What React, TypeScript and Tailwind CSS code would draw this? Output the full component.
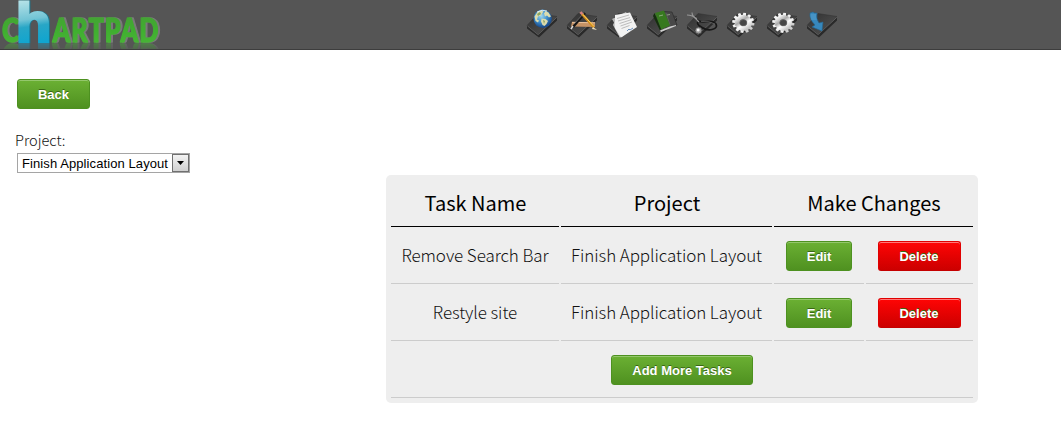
import type { ReactNode } from "react";

const sourceFont = "font-['Noto_Sans_CJK_SC','Noto_Sans',sans-serif]";
const lightFont = "font-['Noto_Sans_CJK_SC_Light','Noto_Sans_CJK_SC_DemiLight','Noto_Sans_CJK_SC','Noto_Sans',sans-serif]";

function Button({ children, tone = "green", width }: { children: ReactNode; tone?: "green" | "red"; width: string }) {
  const color =
    tone === "green"
      ? "border-[#4d9120] from-[#6bb033] to-[#4f9120] shadow-[inset_0_1px_0_#94c76c] [text-shadow:0_-1px_0_#396715]"
      : "border-[#e00000] border-b-[#c50000] from-[#ff0505] to-[#cc0000] pr-px shadow-[inset_0_1px_0_#ff7878] [text-shadow:0_-1px_0_#396715]";
  return (
    <button
      className={`${width} ${color} block h-[30px] shrink-0 rounded-[3px] border bg-linear-to-b text-center font-['Liberation_Sans',sans-serif] text-[13px] leading-[29px] font-bold whitespace-nowrap text-white`}
    >
      {children}
    </button>
  );
}

function Logo() {
  return (
    <svg
      width="180"
      height="43"
      viewBox="0 0 180 43"
      className="block shrink-0 overflow-hidden [-webkit-box-reflect:below_0px_linear-gradient(transparent_75%,rgba(0,0,0,0.45))]"
    >
      <defs>
        <linearGradient id="leaf" gradientUnits="userSpaceOnUse" x1="0" y1="16" x2="0" y2="43">
          <stop offset="0" stopColor="#44a234" />
          <stop offset="0.5" stopColor="#3fae2f" />
          <stop offset="1" stopColor="#47b436" />
        </linearGradient>
        <linearGradient id="aqua" gradientUnits="userSpaceOnUse" x1="26" y1="0" x2="32" y2="43">
          <stop offset="0" stopColor="#b5e2e8" />
          <stop offset="0.45" stopColor="#72c4d5" />
          <stop offset="0.62" stopColor="#28a6c6" />
          <stop offset="1" stopColor="#10a5cf" />
        </linearGradient>
      </defs>
      <g
        fontFamily="Lato, sans-serif"
        fontWeight="900"
        fontSize="33"
        fill="url(#leaf)"
        stroke="url(#leaf)"
        strokeWidth="1.5"
        strokeLinejoin="round"
        className="[filter:drop-shadow(2px_0px_0.5px_#7a7a7a)]"
      >
        <text x="2" y="41.5" textLength="17" lengthAdjust="spacingAndGlyphs">C</text>
        <text x="52.5" y="41.5" textLength="107" lengthAdjust="spacingAndGlyphs" letterSpacing="1.5">ARTPAD</text>
      </g>
      <text
        x="16"
        y="42"
        fontFamily="Liberation Sans, sans-serif"
        fontWeight="700"
        fontSize="56"
        fill="url(#aqua)"
        stroke="url(#aqua)"
        strokeWidth="3"
        textLength="35"
        lengthAdjust="spacingAndGlyphs"
        className="[filter:drop-shadow(1px_0px_0px_#1b7890)]"
      >
        h
      </text>
    </svg>
  );
}

function Tile({ children }: { children: ReactNode }) {
  return (
    <a href="#" className="block size-8">
      <svg width="32" height="32" viewBox="0 0 32 32" className="block">
        <path d="M1 18.5 12 27.5 31 10.5V13.5L13 30.5 1 21.5Z" fill="#2a2a2a" />
        <path d="M1 18.5 12 6.5 31 9.5 12 27.5Z" fill="url(#slate)" stroke="#303030" strokeWidth="0.5" />
        <path d="m1.5 19 10.6 8.7L30.5 10.5" fill="none" stroke="#707070" strokeWidth="0.6" />
        {children}
      </svg>
    </a>
  );
}

function Globe() {
  return (
    <>
      <circle cx="16.7" cy="11.8" r="9.2" fill="url(#ocean)" />
      <path d="M8.5 9.5 11.5 5l4-1.500 2 1-1.500 2-1 2-3 1-1 3 2 1-1 2-2.500-1.500ZM19.500 4l3 1.500 2.500 4-2 1-2-2-2 1-1-3ZM15.500 11.500l4 .5 2.500 2-1.500 3-2 2-2-1-1.500-3.500Z" fill="#dcdcae" />
      <path d="m11 7 3-2 1 2-3 2ZM17 13l2 1-1 3Z" fill="#8aa562" />
      <path d="M11 5q5-3 10-1" stroke="#f5fdff" strokeWidth="1" fill="none" opacity="0.8" />
    </>
  );
}

function Drafting() {
  return (
    <>
      <path d="m6 15 23 .5v4.5L5 19.500Z" fill="#c69366" />
      <path d="m6 15.3 23 .5" stroke="#ebc29b" />
      <path d="M19 6 7 20" stroke="#161616" strokeWidth="2.5" />
      <path d="M18 6 8 17" stroke="#8b8b8b" strokeWidth="0.7" />
      <path d="m7 19-2 3" stroke="#ddd" strokeWidth="1.4" />
      <path d="m16 7 12 13.500" stroke="#cf8b1e" strokeWidth="2.6" />
      <path d="m17 7.500 11 12" stroke="#ffd45f" strokeWidth="1" />
      <path d="m14.500 5 1.800 2.300" stroke="#d9827c" strokeWidth="2.600" />
      <path d="m27 20 4 3-5-1Z" fill="#efe1bf" />
    </>
  );
}

function Papers() {
  return (
    <>
      <path d="M6 12 20 5l9 15-13 10Z" fill="#b7b7b7" />
      <path d="M7 18 11 9l11 9-8 13Z" fill="#ccc" />
      <path d="M9 8 24 5.500 31 20 15 30.500 9 21Z" fill="#f2f2f2" />
      <path d="m11 11.500 12-3.500M12 14l12-3.400M13.500 16.500l11.500-3.700M14.500 19l11.500-4M15.500 21.500l8-3" stroke="#b4b4b4" strokeWidth="0.9" />
      <path d="m21 24 2-2 1 1 3-2" stroke="#6c91bd" fill="none" />
    </>
  );
}

function Books() {
  return (
    <>
      <path d="m18 4.500 8 .5 5 13-11 4Z" fill="#484848" stroke="#292929" strokeWidth="0.6" />
      <path d="m20 6 4 12" stroke="#6b6b6b" strokeWidth="0.6" />
      <path d="M9 6 18 3.500l6 15-9 4Z" fill="#37791f" />
      <path d="m8.500 6 6.500 16-1 1.500L7 9Z" fill="#142f0e" />
      <path d="m14 23.500 10-4 6-1.500v1l-15 6Z" fill="#d0d0d0" />
      <path d="m13 9 4-1m4 0 3-.5" stroke="#a1b994" strokeWidth="0.8" />
    </>
  );
}

function Stethoscope() {
  return (
    <>
      <path d="M9 10q3 5 8 5 10-2 13 2 2 4-4 5.500t-13-4q-3-3 0-4" fill="none" stroke="#171717" strokeWidth="1.700" />
      <path d="M1 8q5 0 8 3t4 4M6 5.500q0 4 5 6" fill="none" stroke="#979797" strokeWidth="1.100" />
      <path d="M15 14.500q8-1 14 2.500" fill="none" stroke="#848484" strokeWidth="0.5" />
      <circle cx="12.500" cy="23.500" r="3.500" fill="#999" stroke="#333" strokeWidth="0.7" />
      <circle cx="12.200" cy="23" r="1.500" fill="#f4f4f4" />
    </>
  );
}

function Gear() {
  const teeth = [0, 30, 60, 90, 120, 150, 180, 210, 240, 270, 300, 330];
  return (
    <g transform="translate(17.3 15.8) rotate(8) scale(1.03 .93)">
      {teeth.map((angle) => (
        <path key={angle} d="m-1.700-7.500.4-3.300h2.600l.4 3.300Z" fill={angle > 60 && angle < 160 ? "#d0d0d0" : "#f2f2f2"} transform={`rotate(${angle})`} />
      ))}
      <circle r="6" fill="none" stroke="url(#silver)" strokeWidth="5" />
      <circle r="3.500" fill="#454545" stroke="#888" strokeWidth="0.5" />
    </g>
  );
}

function ImportArrow() {
  return (
    <>
      <path d="m4 6 3-1 1.500 1L11 6q-1 6 2 10l4-1-1 9-10-4 3-2Q3 12 4 6Z" fill="#3788bd" stroke="#256690" strokeWidth="0.6" />
      <path d="M4.500 8H10m-5.500 2H10m-5 2h5.500" stroke="#64a9d2" strokeWidth="0.7" />
    </>
  );
}

function HeadCell({ children, wide = false }: { children: ReactNode; wide?: boolean }) {
  return (
    <div className={`${wide ? "col-span-2" : ""} flex h-[47px] items-center justify-center border-b border-black pb-px pl-px text-[20px]`}>
      {children}
    </div>
  );
}

function Cell({ children, end = false }: { children: ReactNode; end?: boolean }) {
  return (
    <div className={`${end ? "col-span-4" : ""} flex h-[55px] items-center justify-center border-b border-[#ccc] whitespace-nowrap`}>
      {children}
    </div>
  );
}

function Label({ children }: { children: ReactNode }) {
  return <span className={`${lightFont} pb-[4px] text-[17px] leading-[25px] font-light tracking-[-0.08px] text-[#111]`}>{children}</span>;
}

export default function App() {
  return (
    <div className={`h-[444px] w-[1061px] overflow-hidden bg-white text-black ${sourceFont}`}>
      <header className="flex h-[50px] items-start overflow-hidden border-b border-[#3d3d3d] bg-[#555]">
        <svg width="0" height="0" className="absolute">
          <defs>
            <linearGradient id="slate" x2="1" y2="1"><stop stopColor="#303030" /><stop offset="1" stopColor="#555" /></linearGradient>
            <linearGradient id="silver" x2="1" y2="1"><stop stopColor="#fff" /><stop offset=".35" stopColor="#aaa" /><stop offset=".6" stopColor="#fff" /><stop offset="1" stopColor="#bbb" /></linearGradient>
            <radialGradient id="ocean" cx=".42" cy=".35" r=".6"><stop stopColor="#9fd8ef" /><stop offset=".55" stopColor="#3f8fcc" /><stop offset="1" stopColor="#1a4c8c" /></radialGradient>
          </defs>
        </svg>
        <Logo />
        <nav className="ml-[346px] flex gap-2 pt-[7px]">
          <Tile><Globe /></Tile>
          <Tile><Drafting /></Tile>
          <Tile><Papers /></Tile>
          <Tile><Books /></Tile>
          <Tile><Stethoscope /></Tile>
          <Tile><Gear /></Tile>
          <Tile><Gear /></Tile>
          <Tile><ImportArrow /></Tile>
        </nav>
      </header>

      <main>
        <div className="flex h-[125px] flex-col items-start pt-[29px] pl-[17px]">
          <Button width="w-[73px]">Back</Button>
          <label className={`${lightFont} mt-[21px] -ml-[2px] h-[23px] text-[14.6px] leading-[20px] font-light text-[#111]`}>Project:</label>
          <button className="flex h-5 w-[173px] shrink-0 items-center border border-[#a5a5a5] bg-white pl-1 font-['Liberation_Sans',sans-serif] text-[13px] leading-[18px]">
            <span className="w-[150px] pt-px text-left tracking-[0.09px] whitespace-nowrap">Finish Application Layout</span>
            <span className="flex h-[18px] w-[17px] items-center justify-center border border-[#707070] bg-linear-to-b from-[#f3f3f3] to-[#d0d0d0]">
              <svg width="7" height="4" className="block"><path d="M0 0h7L3.5 4Z" fill="#000" /></svg>
            </span>
          </button>
        </div>

        <section className="ml-[386px] grid h-[228px] w-[592px] grid-cols-[168px_211px_90px_107px] content-start gap-[2px] rounded-[5px] bg-[#eee] p-[5px]">
          <HeadCell>Task Name</HeadCell>
          <HeadCell>Project</HeadCell>
          <HeadCell wide>Make Changes</HeadCell>
          <Cell><Label>Remove Search Bar</Label></Cell>
          <Cell><Label>Finish Application Layout</Label></Cell>
          <Cell><Button width="w-[66px]">Edit</Button></Cell>
          <Cell><Button tone="red" width="w-[83px]">Delete</Button></Cell>
          <Cell><Label>Restyle site</Label></Cell>
          <Cell><Label>Finish Application Layout</Label></Cell>
          <Cell><Button width="w-[66px]">Edit</Button></Cell>
          <Cell><Button tone="red" width="w-[83px]">Delete</Button></Cell>
          <Cell end><Button width="w-[142px]">Add More Tasks</Button></Cell>
        </section>
      </main>
    </div>
  );
}
